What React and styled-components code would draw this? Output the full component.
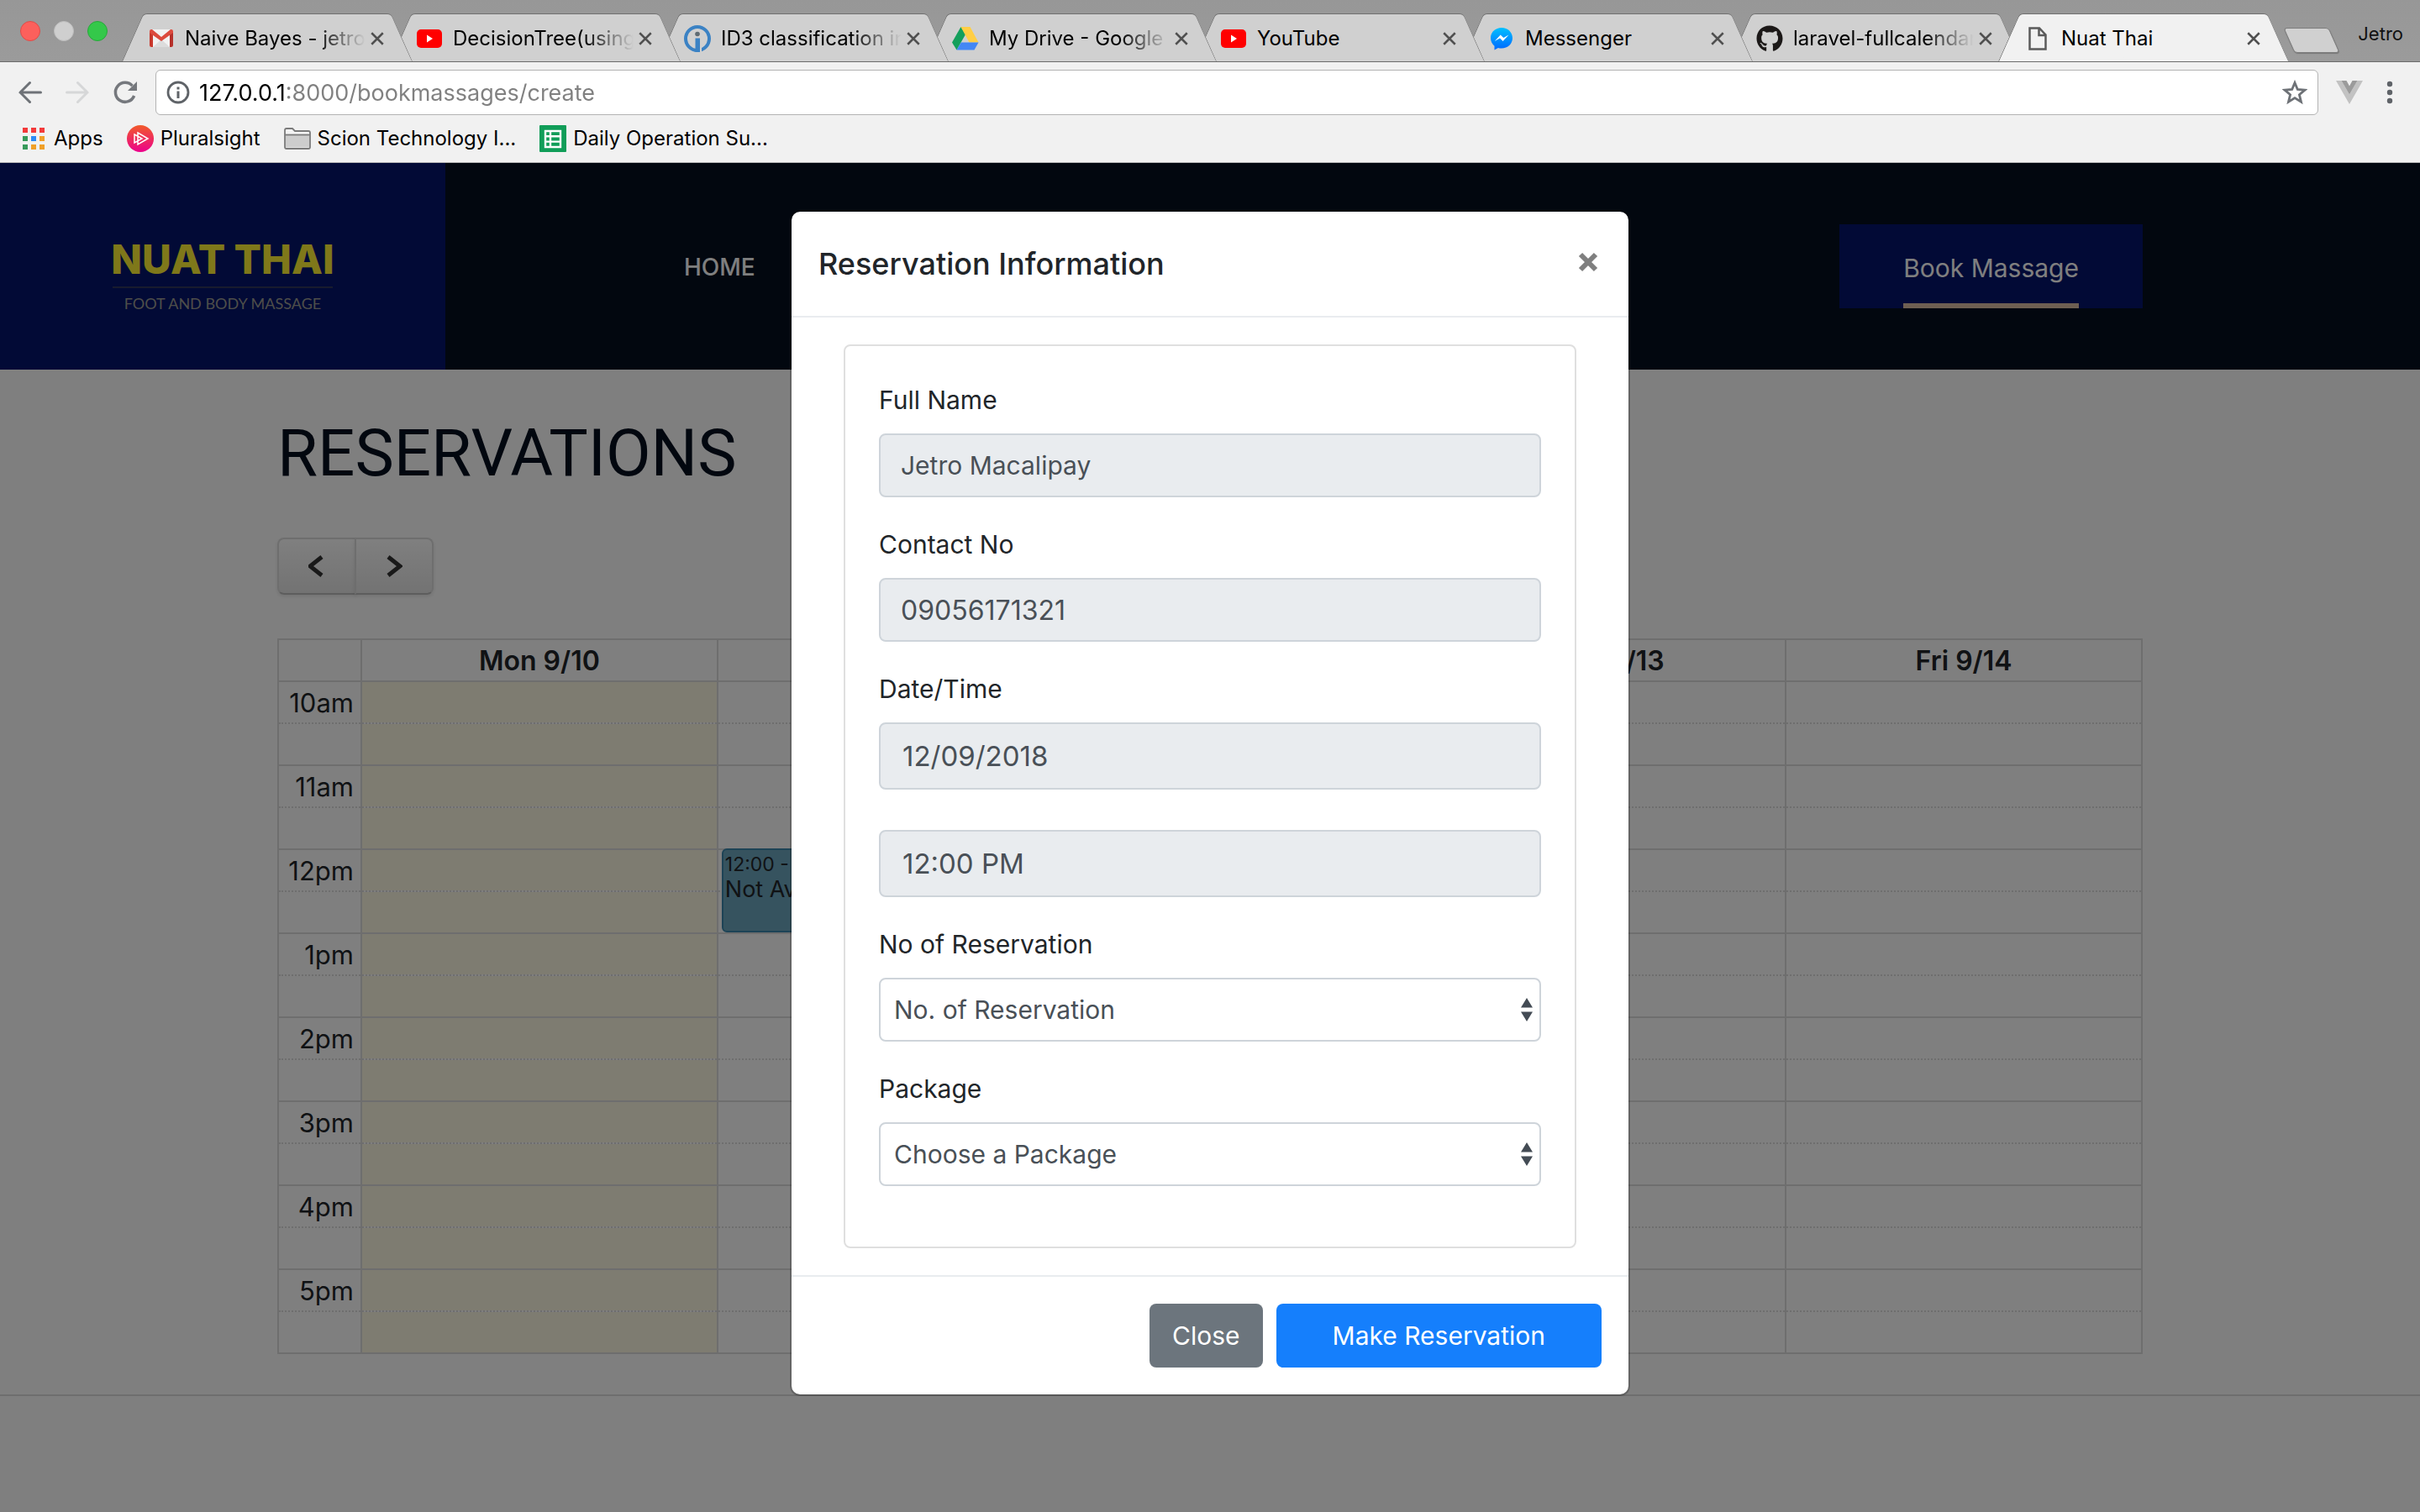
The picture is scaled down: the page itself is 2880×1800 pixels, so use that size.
import React from "react";
import styled, { createGlobalStyle, css } from "styled-components";
import { FaGithub } from "react-icons/fa";

const sans = `Inter, "Liberation Sans", Arial, sans-serif`;

const GlobalStyle = createGlobalStyle`
  *, *::before, *::after { box-sizing: border-box; }
  body { margin: 0; font-family: ${sans}; font-size: 30px; color: #212529; background: #fff; }
  button, input, select { font-family: inherit; margin: 0; }
  h1, h2 { margin: 0; }
  a { color: inherit; text-decoration: none; }
`;

const Window = styled.div`
  display: flex;
  flex-direction: column;
  min-height: 100vh;
`;

/* ---------- Browser chrome ---------- */

const TabStrip = styled.div`
  display: flex;
  align-items: flex-end;
  height: 74px;
  padding-right: 20px;
  background: linear-gradient(#979797, #9b9b9b);
  border-bottom: 1px solid #6b6b6b;
`;

const TrafficLights = styled.div`
  display: flex;
  flex: none;
  gap: 16px;
  width: 145px;
  padding-left: 24px;
  align-self: center;
`;

const Light = styled.span`
  width: 24px;
  height: 24px;
  border-radius: 50%;
  border: 1px solid ${(p) => p.$edge};
  background: ${(p) => p.$fill};
`;

const TabList = styled.div`
  display: flex;
  flex: 1;
  min-width: 0;
  max-width: 2579px;
`;

const tabEdge = css`
  content: "";
  position: absolute;
  z-index: -1;
  top: 0;
  bottom: 0;
  width: 56%;
  border-top: 1px solid #6f6f6f;
  background: ${(p) => (p.$active ? "#f1f1f1" : "#d0d0d0")};
`;

const Tab = styled.div`
  position: relative;
  z-index: ${(p) => (p.$active ? 20 : 10 - p.$order)};
  display: flex;
  align-items: center;
  flex: 0 1 346px;
  min-width: 0;
  height: 57px;
  margin-bottom: ${(p) => (p.$active ? "-1px" : "0")};
  padding: 2px 34px 0 31px;

  & + & {
    margin-left: -27px;
  }

  &::before {
    ${tabEdge}
    left: 0;
    border-left: 1px solid #6f6f6f;
    border-top-left-radius: 5px;
    transform: skewX(-24deg);
    transform-origin: bottom left;
  }

  &::after {
    ${tabEdge}
    right: 0;
    border-right: 1px solid #7f7f7f;
    border-top-right-radius: 5px;
    transform: skewX(24deg);
    transform-origin: bottom right;
  }
`;

const TabIcon = styled.span`
  display: flex;
  justify-content: center;
  flex: none;
  width: 32px;
  margin-right: 12px;
`;

const TabTitle = styled.span`
  flex: 1;
  min-width: 0;
  overflow: hidden;
  white-space: nowrap;
  font-size: 24px;
  line-height: 32px;
  color: #000;
  mask-image: ${(p) =>
    p.$fade ? "linear-gradient(90deg, #000 calc(100% - 60px), transparent)" : "none"};
`;

const TabClose = styled.button`
  display: flex;
  flex: none;
  margin-left: 6px;
  padding: 0;
  border: 0;
  background: none;
`;

const NewTab = styled.button`
  flex: none;
  width: 54px;
  height: 30px;
  margin: 0 28px 10px 0;
  padding: 0;
  border: 1px solid #7d7d7d;
  border-radius: 4px;
  background: #d0d0d0;
  box-shadow: 0 1px 1px #777;
  transform: skewX(24deg);
`;

const Profile = styled.span`
  margin-left: auto;
  align-self: flex-start;
  padding: 24px 0 0;
  font-size: 22px;
  line-height: 32px;
  color: #111;
`;

const Toolbar = styled.div`
  display: flex;
  align-items: center;
  gap: 21px;
  padding: 9px 32px 0 22px;
  background: #f1f1f1;
`;

const ToolGroup = styled.div`
  display: flex;
  align-items: center;
  gap: 28px;
`;

const ToolButton = styled.button`
  display: flex;
  padding: 0;
  border: 0;
  background: none;
`;

const AddressBar = styled.div`
  display: flex;
  flex: 1;
  align-items: center;
  gap: 11px;
  height: 54px;
  padding: 0 12px;
  border: 1px solid #b3b3b3;
  border-radius: 6px;
  background: #fff;
`;

const AddressInput = styled.input`
  flex: 1;
  min-width: 0;
  height: 40px;
  padding: 0;
  border: 0;
  outline: 0;
  font-size: 27px;
  color: #808080;
  background: linear-gradient(90deg, #000 104px, #808080 104px);
  background-clip: text;
  -webkit-text-fill-color: transparent;
`;

const Bookmarks = styled.nav`
  display: flex;
  align-items: center;
  gap: 28px;
  height: 57px;
  padding-left: 24px;
  border-bottom: 1px solid #b4b4b4;
  background: #f1f1f1;
`;

const Bookmark = styled.a`
  display: flex;
  align-items: center;
  gap: 8px;
  font-size: 24px;
  line-height: 32px;
  color: #000;
`;

/* ---------- Site ---------- */

const Viewport = styled.div`
  position: relative;
  flex: 1;
  background: #fff;
`;

const SiteHeader = styled.header`
  display: grid;
  grid-template-columns: 530px 1fr;
  height: 246px;
  background: #040e1e;
`;

const Brand = styled.a`
  display: flex;
  flex-direction: column;
  align-items: center;
  justify-content: center;
  padding-top: 24px;
  background: #04146c;
`;

const BrandName = styled.span`
  font-size: 48px;
  font-weight: 800;
  line-height: 48px;
  color: #fff034;
`;

const BrandRule = styled.span`
  width: 262px;
  height: 2px;
  margin: 8px 0 6px;
  background: #30365c;
`;

const BrandTag = styled.span`
  font-family: Lato, ${sans};
  font-size: 18px;
  line-height: 24px;
  color: #9c9c94;
`;

const SiteNav = styled.nav`
  display: flex;
  align-items: center;
  justify-content: space-between;
  padding: 0 330px 0 284px;
  color: #fff;
`;

const NavLink = styled.a`
  padding-top: 2px;
  font-size: 28px;
  font-weight: 500;
  line-height: 40px;
`;

const BookLink = styled.a`
  padding: 0 76px;
  background: #04146c;
`;

const BookLabel = styled.span`
  display: block;
  padding: 29px 0 19px;
  border-bottom: 6px solid #dcbea4;
  font-size: 30px;
  line-height: 46px;
`;

const Main = styled.main`
  max-width: 2220px;
  margin: 0 auto;
  padding: 52px 0 48px;
`;

const PageTitle = styled.h1`
  font-family: Roboto, ${sans};
  font-size: 78px;
  font-weight: 400;
  line-height: 96px;
  color: #040e1e;
`;

const CalendarNav = styled.div`
  display: inline-flex;
  margin: 52px 0;
`;

const CalendarButton = styled.button`
  display: flex;
  align-items: center;
  justify-content: center;
  width: 94px;
  height: 68px;
  padding: 0;
  border: 2px solid #dcdcdc;
  border-bottom-color: #bbb;
  background: linear-gradient(#fff, #e6e6e6);
  box-shadow: 0 2px 4px rgba(0, 0, 0, 0.1);

  &:first-child {
    border-radius: 8px 0 0 8px;
  }
  &:last-child {
    margin-left: -2px;
    border-radius: 0 8px 8px 0;
  }
`;

const Calendar = styled.table`
  width: 100%;
  table-layout: fixed;
  border-collapse: collapse;
  color: #212529;
`;

const AxisCol = styled.col`
  width: 99px;
`;

const HeadCell = styled.th`
  height: 50px;
  padding: 2px 0 0;
  border: 2px solid #ddd;
  font-size: 32px;
  font-weight: 600;
  line-height: 40px;
`;

const slotBorder = css`
  border: 2px solid #ddd;
  border-top-style: ${(p) => (p.$half ? "dotted" : "solid")};
  border-bottom-style: ${(p) => (p.$half ? "solid" : "dotted")};
`;

const AxisCell = styled.th`
  ${slotBorder}
  height: 50px;
  padding: 2px 8px 0 0;
  font-size: 31px;
  font-weight: 400;
  line-height: 40px;
  text-align: right;
`;

const Slot = styled.td`
  ${slotBorder}
  position: relative;
  padding: 0;
  background: ${(p) => (p.$today ? "#fcf8e3" : "transparent")};
  background-clip: padding-box;
`;

const Event = styled.div`
  position: absolute;
  top: -2px;
  left: 4px;
  right: 10px;
  z-index: 1;
  height: 100px;
  padding: 2px;
  border: 2px solid #3a87ad;
  border-radius: 6px;
  background: #6ca6be;
  color: #212529;
  font-size: 27px;
  line-height: 30px;
`;

const EventTime = styled.div`
  font-size: 23px;
  line-height: 30px;
`;

const SiteFooter = styled.footer`
  border-top: 2px solid #ddd;
`;

/* ---------- Modal ---------- */

const Backdrop = styled.div`
  position: absolute;
  inset: 0;
  z-index: 5;
  display: flex;
  justify-content: center;
  align-items: flex-start;
  padding-top: 56px;
  background: rgba(0, 0, 0, 0.5);
`;

const Dialog = styled.section`
  width: 1000px;
  max-width: 100%;
  border: 2px solid rgba(0, 0, 0, 0.2);
  border-radius: 12px;
  background: #fff;
  background-clip: padding-box;
`;

const DialogHeader = styled.header`
  display: flex;
  align-items: center;
  justify-content: space-between;
  padding: 32px;
  border-bottom: 2px solid #e9ecef;
`;

const DialogTitle = styled.h2`
  font-size: 36px;
  font-weight: 500;
  line-height: 60px;
`;

const DialogClose = styled.button`
  display: flex;
  padding: 4px 4px 8px;
  border: 0;
  background: none;
`;

const DialogBody = styled.div`
  padding: 32px 62px;
`;

const Card = styled.div`
  display: flex;
  flex-direction: column;
  gap: 32px;
  padding: 40px 40px 72px;
  border: 2px solid #dfdfdf;
  border-radius: 8px;
`;

const Field = styled.div`
  display: flex;
  flex-direction: column;
  gap: 16px;
`;

const Label = styled.label`
  font-size: 30px;
  line-height: 48px;
`;

const control = css`
  width: 100%;
  border: 2px solid #ced4da;
  border-radius: 8px;
  color: #495057;
  opacity: 1;
`;

const TextBox = styled.input`
  ${control}
  height: ${(p) => (p.$tall ? "80px" : "76px")};
  margin-top: ${(p) => (p.$spaced ? "32px" : "0")};
  padding: 0 ${(p) => (p.$tall ? "26px" : "24px")};
  background: #e9ecef;
  font-size: ${(p) => (p.$tall ? "33px" : p.$numeric ? "32px" : "30px")};
`;

const SelectWrap = styled.div`
  display: grid;
  align-items: center;

  & > * {
    grid-area: 1 / 1;
  }
  & > svg {
    justify-self: end;
    margin-right: 10px;
    pointer-events: none;
  }
`;

const Select = styled.select`
  ${control}
  height: 76px;
  padding: 0 40px 0 16px;
  appearance: none;
  background: #fff;
  font-size: 30px;
`;

const DialogFooter = styled.footer`
  display: flex;
  justify-content: flex-end;
  gap: 16px;
  padding: 32px;
  border-top: 2px solid #e9ecef;
`;

const Button = styled.button`
  height: 76px;
  padding: 0 ${(p) => (p.$primary ? 67 : 27)}px;
  border: 0;
  border-radius: 8px;
  background: ${(p) => (p.$primary ? "#157ffc" : "#6c757d")};
  color: #fff;
  font-size: 30px;
`;

/* ---------- Icons ---------- */

const CrossIcon = ({ size = 16, stroke = 2.5, color = "#505050" }) => (
  <svg width={size} height={size} viewBox={`0 0 ${size} ${size}`}>
    <path
      d={`M${stroke / 2} ${stroke / 2}L${size - stroke / 2} ${size - stroke / 2}M${size - stroke / 2} ${stroke / 2}L${stroke / 2} ${size - stroke / 2}`}
      stroke={color}
      strokeWidth={stroke}
    />
  </svg>
);

const GmailIcon = () => (
  <svg width="28" height="22" viewBox="0 0 28 22">
    <rect width="28" height="21" rx="2" fill="#f2f2f2" />
    <path d="M4 21L14 12L24 21z" fill="#dcdcdc" />
    <path d="M0 2v17a2 2 0 0 0 2 2h2V5z" fill="#c8382c" />
    <path d="M28 2v17a2 2 0 0 1-2 2h-2V5z" fill="#b5302a" />
    <path d="M0 2Q0 0 2 0H3L14 9L25 0h1q2 0 2 2v2L14 14L0 4z" fill="#dc4a3d" />
  </svg>
);

const YouTubeIcon = () => (
  <svg width="30" height="22" viewBox="0 0 30 22">
    <rect width="30" height="22" rx="5" fill="#f00" />
    <path d="M12 6.5v9l7-4.500z" fill="#fff" />
  </svg>
);

const InfoRingIcon = () => (
  <svg width="32" height="32" viewBox="0 0 32 32">
    <circle cx="16" cy="16" r="14" fill="none" stroke="#3b82c4" strokeWidth="4" />
    <path d="M13.500 15.500h5.500V32h-5.500z" fill="#3b82c4" />
    <path d="M20 24v8" stroke="#d0d0d0" strokeWidth="2" />
    <circle cx="16" cy="10.500" r="2.800" fill="#5f6b73" />
  </svg>
);

const DriveIcon = () => (
  <svg width="32" height="28" viewBox="0 0 32 28">
    <path d="M10.500 0L0 18.500L5.500 27.500L16 9z" fill="#149f5c" />
    <path d="M10.500 0h11L31.500 18.500H20.500z" fill="#ffce44" />
    <path d="M10.800 18.500H31.500L26.500 27.500H5.500z" fill="#4387f5" />
  </svg>
);

const MessengerIcon = () => (
  <svg width="28" height="28" viewBox="0 0 28 28">
    <defs>
      <linearGradient id="msg" x1="0" y1="0" x2="0" y2="1">
        <stop offset="0" stopColor="#00c0ff" />
        <stop offset="1" stopColor="#0068ff" />
      </linearGradient>
    </defs>
    <path d="M14 1C6.500 1 1 6.500 1 13.300c0 3.800 1.700 7.200 4.500 9.400V27.500l4.400-2.500c1.300.4 2.600.6 4.100.6c7.500 0 13-5.500 13-12.300S21.500 1 14 1z" fill="url(#msg)" />
    <path d="M5.800 17L12.700 9.500L16.300 13L22.500 9.500L15.600 17L12 13.500z" fill="#fff" />
  </svg>
);

const PageIcon = () => (
  <svg width="22" height="28" viewBox="0 0 22 28">
    <path d="M1.500 1.500H13L20.500 9.500V26.500H1.500zM12.500 1.500V10H20.500" fill="none" stroke="#5a5a5a" strokeWidth="2.500" />
  </svg>
);

const ArrowIcon = ({ color, flip }) => (
  <svg width="28" height="28" viewBox="0 0 28 28">
    <path
      d={flip ? "M1.500 14H26M14.500 2.500L26 14L14.500 25.500" : "M26.500 14H2M13.500 2.500L2 14L13.500 25.500"}
      fill="none"
      stroke={color}
      strokeWidth="3"
      strokeLinecap="round"
    />
  </svg>
);

const ReloadIcon = () => (
  <svg width="30" height="30" viewBox="0 0 30 30">
    <path d="M25.600 19A11.500 11.500 0 1 1 23.500 7.200" fill="none" stroke="#75787d" strokeWidth="3.500" />
    <path d="M29 2v11H18z" fill="#75787d" />
  </svg>
);

const SiteInfoIcon = () => (
  <svg width="28" height="28" viewBox="0 0 28 28">
    <circle cx="14" cy="14" r="12" fill="none" stroke="#5f6368" strokeWidth="2.800" />
    <path d="M12.500 12.500h3V21h-3zM12.500 7.500h3v3h-3z" fill="#5f6368" />
  </svg>
);

const StarIcon = () => (
  <svg width="30" height="30" viewBox="0 0 30 30">
    <path d="M15 3.500L18.300 11.500L27 12.100L20.400 17.700L22.500 26.200L15 21.600L7.500 26.200L9.600 17.700L3 12.100L11.700 11.500z" fill="none" stroke="#6e7277" strokeWidth="2.800" />
  </svg>
);

const VueIcon = () => (
  <svg width="32" height="28" viewBox="0 0 32 28">
    <path d="M0 0H6.500L16 16.500L25.500 0H32L16 28z" fill="#c2c2c2" />
    <path d="M6.500 0H12.500L16 6.500L19.500 0H25.500L16 16.500z" fill="#9b9b9b" />
  </svg>
);

const DotsIcon = () => (
  <svg width="8" height="28" viewBox="0 0 8 28">
    {[4, 14, 24].map((y) => (
      <circle key={y} cx="4" cy={y} r="3.200" fill="#5f6368" />
    ))}
  </svg>
);

const AppsIcon = () => {
  const colors = ["#f33a3a", "#f33a3a", "#f33a3a", "#389a5a", "#2a8bf5", "#f0a028", "#389a5a", "#f0a028", "#f0a028"];
  return (
    <svg width="32" height="26" viewBox="0 0 32 26">
      {colors.map((c, i) => (
        <rect key={i} x={3 + (i % 3) * 10} y={Math.floor(i / 3) * 10} width="6" height="6" fill={c} />
      ))}
    </svg>
  );
};

const PluralsightIcon = () => (
  <svg width="32" height="32" viewBox="0 0 32 32">
    <defs>
      <linearGradient id="ps" x1="0" y1="0" x2="0" y2="1">
        <stop offset="0" stopColor="#f15b2a" />
        <stop offset="1" stopColor="#ec008c" />
      </linearGradient>
    </defs>
    <circle cx="16" cy="16" r="16" fill="url(#ps)" />
    <path d="M13 9L25 16L13 23zM9 11L18 16L9 21z" fill="none" stroke="#fff" strokeWidth="1.500" />
  </svg>
);

const FolderIcon = () => (
  <svg width="32" height="26" viewBox="0 0 32 26">
    <path d="M1 3q0-2 2-2h7l3 3h16q2 0 2 2v17q0 2-2 2H3q-2 0-2-2z" fill="#f4f4f4" stroke="#7b7b7b" strokeWidth="1.800" />
    <path d="M2 9h28v14.500H2z" fill="#cdcdcd" />
    <path d="M1 8.500h30" stroke="#7b7b7b" strokeWidth="1.800" />
  </svg>
);

const SheetsIcon = () => (
  <svg width="32" height="32" viewBox="0 0 32 32">
    <rect width="32" height="32" rx="1" fill="#109d58" />
    <path d="M7 7H25V26H7zM7 13.300H25M7 19.600H25M13 7V26" fill="none" stroke="#fff" strokeWidth="2.400" />
  </svg>
);

const ChevronIcon = ({ flip }) => (
  <svg width="20" height="26" viewBox="0 0 20 26">
    <path d={flip ? "M3 2L17 13L3 24" : "M16 2L2 13L16 24"} fill="none" stroke="#333" strokeWidth="5" overflow="visible" />
  </svg>
);

const SelectArrows = () => (
  <svg width="14" height="28" viewBox="0 0 14 28">
    <path d="M0 11.500L7 0L14 11.500zM0 16.500H14L7 28z" fill="#434b54" />
  </svg>
);

/* ---------- Data ---------- */

const tabs = [
  { title: "Naive Bayes - jetro", icon: <GmailIcon />, fade: true },
  { title: "DecisionTree(using", icon: <YouTubeIcon />, fade: true },
  { title: "ID3 classification in", icon: <InfoRingIcon />, fade: true },
  { title: "My Drive - Google", icon: <DriveIcon />, fade: true },
  { title: "YouTube", icon: <YouTubeIcon /> },
  { title: "Messenger", icon: <MessengerIcon /> },
  { title: "laravel-fullcalendar", icon: <FaGithub size={32} color="#1b1817" />, fade: true },
  { title: "Nuat Thai", icon: <PageIcon />, active: true },
];

const bookmarks = [
  { title: "Apps", icon: <AppsIcon /> },
  { title: "Pluralsight", icon: <PluralsightIcon /> },
  { title: "Scion Technology I...", icon: <FolderIcon /> },
  { title: "Daily Operation Su...", icon: <SheetsIcon /> },
];

const days = ["Mon 9/10", "Tue 9/11", "Wed 9/12", "Thu 9/13", "Fri 9/14"];
const hours = ["10am", "11am", "12pm", "1pm", "2pm", "3pm", "4pm", "5pm"];
const today = "Mon 9/10";
const booked = { day: "Tue 9/11", hour: "12pm", time: "12:00 - 1:00", title: "Not Available" };

/* ---------- Sections ---------- */

const BrowserChrome = () => (
  <>
    <TabStrip>
      <TrafficLights>
        <Light $fill="#fc605c" $edge="#e04b47" />
        <Light $fill="#cfcfcf" $edge="#bdbdbd" />
        <Light $fill="#34c84a" $edge="#27a83a" />
      </TrafficLights>
      <TabList>
        {tabs.map((t, i) => (
          <Tab key={i} $order={i} $active={t.active}>
            <TabIcon>{t.icon}</TabIcon>
            <TabTitle $fade={t.fade}>{t.title}</TabTitle>
            <TabClose aria-label={`Close ${t.title}`}>
              <CrossIcon />
            </TabClose>
          </Tab>
        ))}
      </TabList>
      <NewTab aria-label="New tab" />
      <Profile>Jetro</Profile>
    </TabStrip>
    <Toolbar>
      <ToolGroup>
        <ToolButton aria-label="Back">
          <ArrowIcon color="#6e7277" />
        </ToolButton>
        <ToolButton aria-label="Forward">
          <ArrowIcon flip color="#d6d7d8" />
        </ToolButton>
        <ToolButton aria-label="Reload">
          <ReloadIcon />
        </ToolButton>
      </ToolGroup>
      <AddressBar>
        <SiteInfoIcon />
        <AddressInput aria-label="Address" defaultValue="127.0.0.1:8000/bookmassages/create" />
        <ToolButton aria-label="Bookmark this page">
          <StarIcon />
        </ToolButton>
      </AddressBar>
      <ToolGroup>
        <ToolButton aria-label="Vue devtools">
          <VueIcon />
        </ToolButton>
        <ToolButton aria-label="Menu">
          <DotsIcon />
        </ToolButton>
      </ToolGroup>
    </Toolbar>
    <Bookmarks>
      {bookmarks.map((b) => (
        <Bookmark key={b.title} href="#">
          {b.icon}
          {b.title}
        </Bookmark>
      ))}
    </Bookmarks>
  </>
);

const WeekCalendar = () => (
  <Calendar>
    <colgroup>
      <AxisCol />
      {days.map((d) => (
        <col key={d} />
      ))}
    </colgroup>
    <thead>
      <tr>
        <HeadCell as="td" />
        {days.map((d) => (
          <HeadCell key={d} scope="col">
            {d}
          </HeadCell>
        ))}
      </tr>
    </thead>
    <tbody>
      {hours.flatMap((h) =>
        [false, true].map((half) => (
          <tr key={`${h}-${half}`}>
            <AxisCell as={half ? "td" : "th"} $half={half}>
              {half ? null : h}
            </AxisCell>
            {days.map((d) => (
              <Slot key={d} $half={half} $today={d === today}>
                {!half && d === booked.day && h === booked.hour && (
                  <Event>
                    <EventTime>{booked.time}</EventTime>
                    {booked.title}
                  </Event>
                )}
              </Slot>
            ))}
          </tr>
        ))
      )}
    </tbody>
  </Calendar>
);

const ReservationDialog = () => (
  <Dialog role="dialog" aria-labelledby="dialog-title">
    <DialogHeader>
      <DialogTitle id="dialog-title">Reservation Information</DialogTitle>
      <DialogClose aria-label="Close dialog">
        <CrossIcon size={24} stroke={6} color="#7f7f7f" />
      </DialogClose>
    </DialogHeader>
    <DialogBody>
      <Card>
        <Field>
          <Label htmlFor="name">Full Name</Label>
          <TextBox id="name" disabled defaultValue="Jetro Macalipay" />
        </Field>
        <Field>
          <Label htmlFor="contact">Contact No</Label>
          <TextBox id="contact" disabled $numeric defaultValue="09056171321" />
        </Field>
        <Field>
          <Label htmlFor="date">Date/Time</Label>
          <TextBox id="date" disabled $tall defaultValue="12/09/2018" />
          <TextBox aria-label="Time" disabled $tall $spaced defaultValue="12:00 PM" />
        </Field>
        <Field>
          <Label htmlFor="count">No of Reservation</Label>
          <SelectWrap>
            <Select id="count">
              <option>No. of Reservation</option>
            </Select>
            <SelectArrows />
          </SelectWrap>
        </Field>
        <Field>
          <Label htmlFor="package">Package</Label>
          <SelectWrap>
            <Select id="package">
              <option>Choose a Package</option>
            </Select>
            <SelectArrows />
          </SelectWrap>
        </Field>
      </Card>
    </DialogBody>
    <DialogFooter>
      <Button>Close</Button>
      <Button $primary>Make Reservation</Button>
    </DialogFooter>
  </Dialog>
);

export default function App() {
  return (
    <Window>
      <GlobalStyle />
      <BrowserChrome />
      <Viewport>
        <SiteHeader>
          <Brand href="#">
            <BrandName>NUAT THAI</BrandName>
            <BrandRule />
            <BrandTag>FOOT AND BODY MASSAGE</BrandTag>
          </Brand>
          <SiteNav>
            <NavLink href="#">HOME</NavLink>
            <BookLink href="#">
              <BookLabel>Book Massage</BookLabel>
            </BookLink>
          </SiteNav>
        </SiteHeader>
        <Main>
          <PageTitle>RESERVATIONS</PageTitle>
          <CalendarNav>
            <CalendarButton aria-label="Previous week">
              <ChevronIcon />
            </CalendarButton>
            <CalendarButton aria-label="Next week">
              <ChevronIcon flip />
            </CalendarButton>
          </CalendarNav>
          <WeekCalendar />
        </Main>
        <SiteFooter />
        <Backdrop>
          <ReservationDialog />
        </Backdrop>
      </Viewport>
    </Window>
  );
}
